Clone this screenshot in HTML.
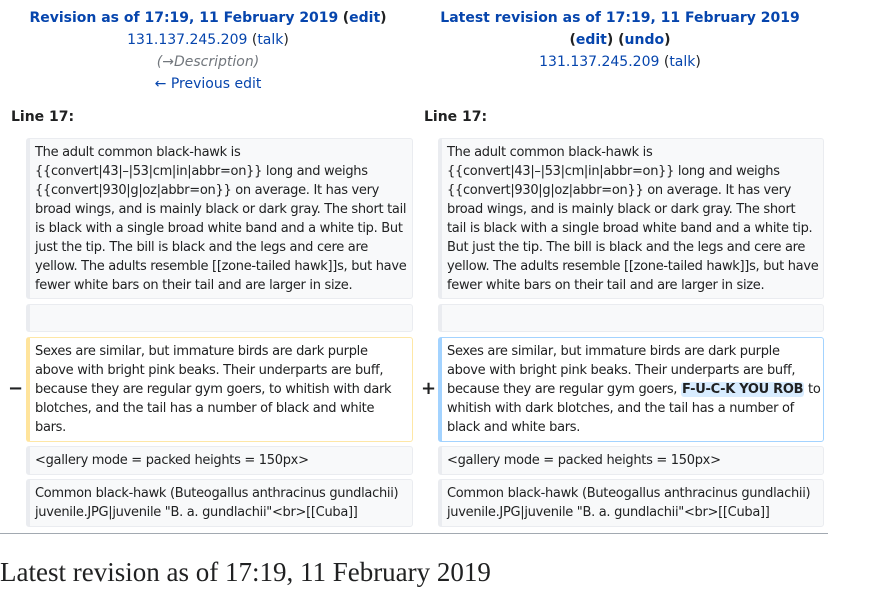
<!DOCTYPE html>
<html><head><meta charset="utf-8"><style>
body{margin:0;width:874px;height:569px;overflow:hidden;background:#fff;font-family:"DejaVu Sans","Liberation Sans",sans-serif;color:#202122;position:relative}
a{color:#0645ad;text-decoration:none}
.hd{position:absolute;text-align:center;font-size:14px;line-height:22px;top:7px}
.hd b{font-weight:bold}
.ln{position:absolute;top:109px;font-weight:bold;font-size:14px}
.bx{position:absolute;box-sizing:border-box;border:1px solid #eaecf0;border-left:4px solid #eaecf0;border-radius:3px;background:#f8f9fa;font-size:13px;line-height:19px;padding:4px 0 0 5px;white-space:nowrap;letter-spacing:-0.3px}
.del{background:#fff;border-color:#fee7a6;border-left-color:#ffe49c}
.add{background:#fff;border-color:#a3d3ff;border-left-color:#a3d3ff}
.L{left:26px;width:387px}.R{left:438px;width:386px}
.mk{position:absolute;font-weight:bold;font-size:18px}
ins{text-decoration:none;font-weight:bold;background:#d8ecff;border-radius:3px;padding:0 1px}
</style></head><body>
<div class="hd" style="left:0;width:416px"><a href="#"><b>Revision as of 17:19, 11 February 2019</b></a> <b>(<a href="#">edit</a>)</b><br><a href="#">131.137.245.209</a> (<a href="#">talk</a>)<br><i style="color:#72777d">(→Description)</i><br><a href="#">← Previous edit</a></div>
<div class="hd" style="left:412px;width:416px"><a href="#"><b>Latest revision as of 17:19, 11 February 2019</b></a><br><b>(<a href="#">edit</a>) (<a href="#">undo</a>)</b><br><a href="#">131.137.245.209</a> (<a href="#">talk</a>)</div>
<div class="ln" style="left:11px">Line 17:</div>
<div class="ln" style="left:424px">Line 17:</div>

<div class="bx L" style="top:138px;height:161px">The adult common black-hawk is<br>{{convert|43|–|53|cm|in|abbr=on}} long and weighs<br>{{convert|930|g|oz|abbr=on}} on average. It has very<br>broad wings, and is mainly black or dark gray. The short tail<br>is black with a single broad white band and a white tip. But<br>just the tip. The bill is black and the legs and cere are<br>yellow. The adults resemble [[zone-tailed hawk]]s, but have<br>fewer white bars on their tail and are larger in size.</div>
<div class="bx R" style="top:138px;height:161px">The adult common black-hawk is<br>{{convert|43|–|53|cm|in|abbr=on}} long and weighs<br>{{convert|930|g|oz|abbr=on}} on average. It has very<br>broad wings, and is mainly black or dark gray. The short<br>tail is black with a single broad white band and a white tip.<br>But just the tip. The bill is black and the legs and cere are<br>yellow. The adults resemble [[zone-tailed hawk]]s, but have<br>fewer white bars on their tail and are larger in size.</div>

<div class="bx L" style="top:304px;height:28px"></div>
<div class="bx R" style="top:304px;height:28px"></div>

<div class="mk" style="left:8px;top:378px">−</div>
<div class="mk" style="left:421px;top:378px">+</div>
<div class="bx L del" style="top:337px;height:105px">Sexes are similar, but immature birds are dark purple<br>above with bright pink beaks. Their underparts are buff,<br>because they are regular gym goers, to whitish with dark<br>blotches, and the tail has a number of black and white<br>bars.</div>
<div class="bx R add" style="top:337px;height:105px">Sexes are similar, but immature birds are dark purple<br>above with bright pink beaks. Their underparts are buff,<br>because they are regular gym goers, <ins>F-U-C-K YOU ROB</ins> to<br>whitish with dark blotches, and the tail has a number of<br>black and white bars.</div>

<div class="bx L" style="top:446px;height:29px">&lt;gallery mode = packed heights = 150px&gt;</div>
<div class="bx R" style="top:446px;height:29px">&lt;gallery mode = packed heights = 150px&gt;</div>

<div class="bx L" style="top:479px;height:48px">Common black-hawk (Buteogallus anthracinus gundlachii)<br>juvenile.JPG|juvenile "B. a. gundlachii"&lt;br&gt;[[Cuba]]</div>
<div class="bx R" style="top:479px;height:48px">Common black-hawk (Buteogallus anthracinus gundlachii)<br>juvenile.JPG|juvenile "B. a. gundlachii"&lt;br&gt;[[Cuba]]</div>

<div style="position:absolute;left:0;top:533px;width:828px;height:1px;background:#a2a9b1"></div>
<div style="position:absolute;left:0;top:555px;font-family:'Liberation Serif',serif;font-size:27px;line-height:34px;white-space:nowrap">Latest revision as of 17:19, 11 February 2019</div>
</body></html>
